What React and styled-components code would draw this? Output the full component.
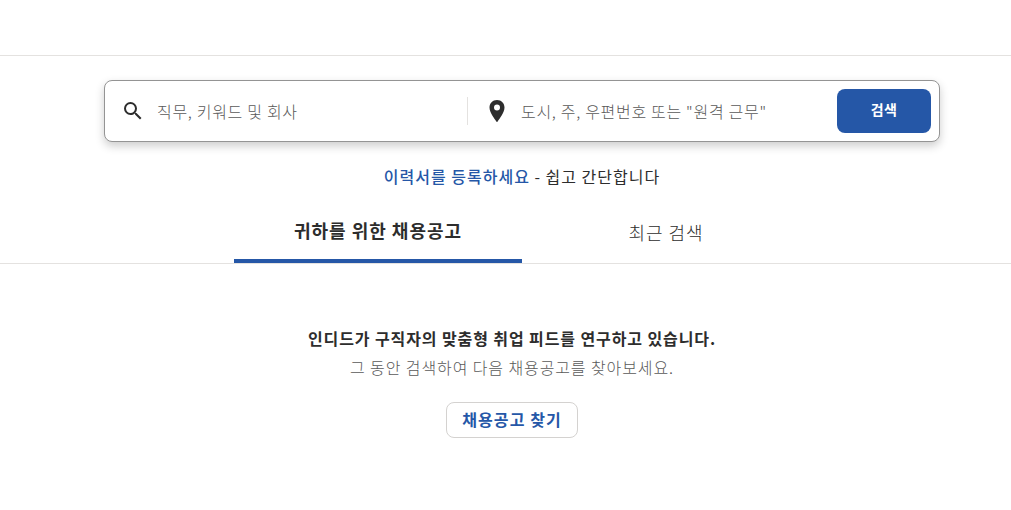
import React from "react";
import styled, { createGlobalStyle } from "styled-components";

const GlobalStyle = createGlobalStyle`
  html, body {
    margin: 0;
    padding: 0;
    background: #fff;
  }
  body {
    font-family: "Noto Sans CJK KR", "Noto Sans", sans-serif;
    color: #2d2d2d;
  }
`;

const Page = styled.div`
  width: 1011px;
  height: 510px;
  overflow: hidden;
`;

const TopBar = styled.header`
  height: 55px;
  border-bottom: 1px solid #e4e2e0;
`;

const SearchSection = styled.section`
  width: 836px;
  margin: 24px 0 0 104px;
`;

const SearchBox = styled.form`
  box-sizing: border-box;
  height: 62px;
  display: flex;
  align-items: center;
  padding: 0 8px 0 16px;
  background: #fff;
  border: 1px solid #949494;
  border-radius: 8px;
  box-shadow: 0 4px 10px rgba(0, 0, 0, 0.2);
`;

const Field = styled.div`
  display: flex;
  align-items: center;
  width: ${(p) => p.$width}px;
  height: 100%;
  gap: ${(p) => p.$gap}px;
`;

const Placeholder = styled.span`
  font-size: 16px;
  line-height: 22px;
  letter-spacing: 0.7px;
  font-weight: 300;
  color: #595959;
  white-space: nowrap;
`;

const Divider = styled.div`
  width: 1px;
  height: 28px;
  margin-right: 17px;
  background: #e4e2e0;
`;

const SearchButton = styled.button`
  width: 94px;
  height: 44px;
  margin-left: auto;
  padding: 0 0 4px;
  border: none;
  border-radius: 8px;
  background: #2557a7;
  color: #fff;
  font-family: inherit;
  font-size: 14px;
  font-weight: 700;
  letter-spacing: 0.4px;
`;

const ResumeLine = styled.p`
  margin: 23px 0 0;
  font-size: 16px;
  line-height: 22px;
  letter-spacing: 1px;
  text-align: center;
  color: #2d2d2d;
`;

const ResumeLink = styled.a`
  color: #2557a7;
  font-weight: 500;
`;

const TabBar = styled.nav`
  height: 76px;
  border-bottom: 1px solid #e4e2e0;
  display: flex;
  padding-left: 234px;
`;

const Tab = styled.div`
  box-sizing: border-box;
  width: 288px;
  height: 76px;
  padding-top: ${(p) => (p.$active ? 30 : 32)}px;
  text-align: center;
  font-size: 18px;
  line-height: 26px;
  letter-spacing: 1px;
  font-weight: ${(p) => (p.$active ? 700 : 300)};
  color: #2d2d2d;
  border-bottom: ${(p) => (p.$active ? "4px solid #2557a7" : "none")};
`;

const Empty = styled.section`
  width: 1024px;
  margin-top: 63px;
  display: flex;
  flex-direction: column;
  align-items: center;
`;

const EmptyTitle = styled.p`
  margin: 0;
  font-size: 16px;
  line-height: 22px;
  letter-spacing: 0.9px;
  font-weight: 700;
  color: #2d2d2d;
`;

const EmptyText = styled.p`
  margin: 7px 0 0;
  font-size: 16px;
  line-height: 22px;
  letter-spacing: 0.9px;
  font-weight: 300;
  color: #595959;
`;

const FindButton = styled.button`
  width: 132px;
  height: 36px;
  margin-top: 24px;
  padding: 0 0 2px;
  background: #fff;
  border: 1px solid #d4d2d0;
  border-radius: 8px;
  color: #2557a7;
  font-family: inherit;
  font-size: 16px;
  font-weight: 700;
  letter-spacing: 1.1px;
`;

const SearchIcon = () => (
  <svg width="24" height="24" viewBox="0 0 24 24" fill="#2d2d2d">
    <path d="M15.5 14h-.79l-.28-.27A6.47 6.47 0 0 0 16 9.5 6.5 6.5 0 1 0 9.5 16c1.61 0 3.09-.59 4.23-1.57l.27.28v.79l5 4.99L20.49 19l-4.99-5zm-6 0C7.01 14 5 11.99 5 9.5S7.01 5 9.5 5 14 7.01 14 9.5 11.99 14 9.5 14z" />
  </svg>
);

const PinIcon = () => (
  <svg width="24" height="24" viewBox="0 0 24 24" fill="#2d2d2d">
    <path d="M12 1C7.6 1 4.5 4.3 4.5 8.6c0 5.2 5.3 11.4 6.8 13.9.3.5 1.1.5 1.4 0 1.5-2.5 6.8-8.7 6.8-13.9C19.5 4.3 16.4 1 12 1zm0 10.4a3 3 0 1 1 0-6 3 3 0 0 1 0 6z" />
  </svg>
);

export default function App() {
  return (
    <Page>
      <GlobalStyle />
      <TopBar />
      <SearchSection>
        <SearchBox>
          <Field $width={346} $gap={12}>
            <SearchIcon />
            <Placeholder>직무, 키워드 및 회사</Placeholder>
          </Field>
          <Divider />
          <Field $width={340} $gap={12}>
            <PinIcon />
            <Placeholder>도시, 주, 우편번호 또는 "원격 근무"</Placeholder>
          </Field>
          <SearchButton type="button">검색</SearchButton>
        </SearchBox>
        <ResumeLine>
          <ResumeLink>이력서를 등록하세요</ResumeLink> - 쉽고 간단합니다
        </ResumeLine>
      </SearchSection>
      <TabBar>
        <Tab $active>귀하를 위한 채용공고</Tab>
        <Tab>최근 검색</Tab>
      </TabBar>
      <Empty>
        <EmptyTitle>인디드가 구직자의 맞춤형 취업 피드를 연구하고 있습니다.</EmptyTitle>
        <EmptyText>그 동안 검색하여 다음 채용공고를 찾아보세요.</EmptyText>
        <FindButton type="button">채용공고 찾기</FindButton>
      </Empty>
    </Page>
  );
}
